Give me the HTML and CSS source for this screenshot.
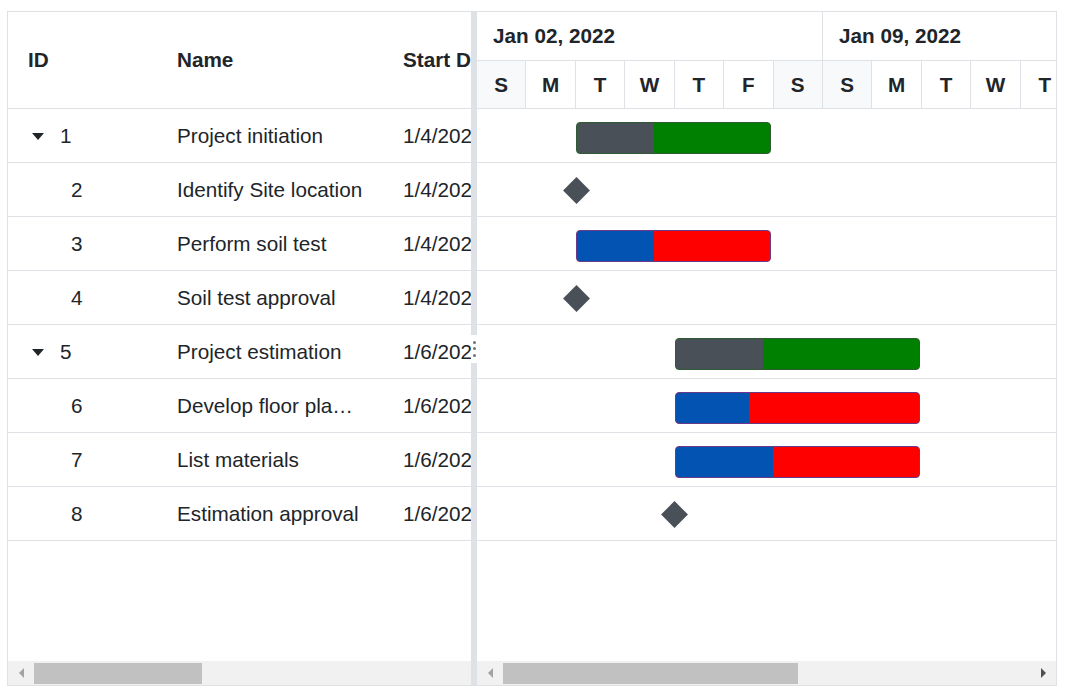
FILE: index.html
```html
<!DOCTYPE html>
<html lang="en">
<head>
    <meta charset="UTF-8">
    <meta name="viewport" content="width=device-width, initial-scale=1.0">
    <title>Gantt</title>
    <link rel="stylesheet" href="styles.css">
</head>
<body>
    <div class="gantt">
        <!-- grid pane -->
        <div class="grid-pane">
            <div class="grid-header">
                <div class="cell col-id">ID</div>
                <div class="cell col-name">Name</div>
                <div class="cell col-start">Start Date</div>
            </div>
            <div class="grid-body">
                <div class="row">
                    <div class="cell col-id parent"><span class="caret"></span>1</div>
                    <div class="cell col-name">Project initiation</div>
                    <div class="cell col-start">1/4/2022</div>
                </div>
                <div class="row">
                    <div class="cell col-id child">2</div>
                    <div class="cell col-name">Identify Site location</div>
                    <div class="cell col-start">1/4/2022</div>
                </div>
                <div class="row">
                    <div class="cell col-id child">3</div>
                    <div class="cell col-name">Perform soil test</div>
                    <div class="cell col-start">1/4/2022</div>
                </div>
                <div class="row">
                    <div class="cell col-id child">4</div>
                    <div class="cell col-name">Soil test approval</div>
                    <div class="cell col-start">1/4/2022</div>
                </div>
                <div class="row">
                    <div class="cell col-id parent"><span class="caret"></span>5</div>
                    <div class="cell col-name">Project estimation</div>
                    <div class="cell col-start">1/6/2022</div>
                </div>
                <div class="row">
                    <div class="cell col-id child">6</div>
                    <div class="cell col-name">Develop floor plan for estimation</div>
                    <div class="cell col-start">1/6/2022</div>
                </div>
                <div class="row">
                    <div class="cell col-id child">7</div>
                    <div class="cell col-name">List materials</div>
                    <div class="cell col-start">1/6/2022</div>
                </div>
                <div class="row">
                    <div class="cell col-id child">8</div>
                    <div class="cell col-name">Estimation approval</div>
                    <div class="cell col-start">1/6/2022</div>
                </div>
            </div>
            <div class="hscroll">
                <div class="sb-btn"><span class="arrow-left off"></span></div>
                <div class="sb-thumb" style="width:168px"></div>
            </div>
        </div>

        <div class="splitter">
            <div class="split-line"></div>
            <div class="split-handle"><span></span><span></span><span></span></div>
            <div class="split-line"></div>
        </div>

        <!-- chart pane -->
        <div class="chart-pane">
            <div class="timeline">
                <div class="tier top">
                    <div class="week">Jan 02, 2022</div>
                    <div class="week">Jan 09, 2022</div>
                </div>
                <div class="tier bottom">
                    <div class="day weekend">S</div>
                    <div class="day">M</div>
                    <div class="day">T</div>
                    <div class="day">W</div>
                    <div class="day">T</div>
                    <div class="day">F</div>
                    <div class="day weekend">S</div>
                    <div class="day weekend">S</div>
                    <div class="day">M</div>
                    <div class="day">T</div>
                    <div class="day">W</div>
                    <div class="day">T</div>
                    <div class="day">F</div>
                    <div class="day weekend">S</div>
                </div>
            </div>
            <div class="chart-body">
                <div class="chart-row">
                    <div class="bar parent-bar" style="left:99px;width:195px"><div class="progress" style="width:40%"></div></div>
                </div>
                <div class="chart-row">
                    <div class="milestone" style="left:99px"></div>
                </div>
                <div class="chart-row">
                    <div class="bar child-bar" style="left:99px;width:195px"><div class="progress" style="width:40%"></div></div>
                </div>
                <div class="chart-row">
                    <div class="milestone" style="left:99px"></div>
                </div>
                <div class="chart-row">
                    <div class="bar parent-bar" style="left:198px;width:245px"><div class="progress" style="width:36%"></div></div>
                </div>
                <div class="chart-row">
                    <div class="bar child-bar" style="left:198px;width:245px"><div class="progress" style="width:30%"></div></div>
                </div>
                <div class="chart-row">
                    <div class="bar child-bar" style="left:198px;width:245px"><div class="progress" style="width:40%"></div></div>
                </div>
                <div class="chart-row">
                    <div class="milestone" style="left:197px"></div>
                </div>
            </div>
            <div class="hscroll">
                <div class="sb-btn"><span class="arrow-left off"></span></div>
                <div class="sb-thumb" style="width:295px"></div>
                <div class="sb-space"></div>
                <div class="sb-btn"><span class="arrow-right"></span></div>
            </div>
        </div>
    </div>
</body>
</html>
```

FILE: styles.css
```css
body {
    margin: 0;
    padding: 11px 0 0 7px;
    font-family: "Liberation Sans", Arial, sans-serif;
    color: #212529;
    background: #fff;
}
.gantt {
    width: 1050px;
    height: 675px;
    box-sizing: border-box;
    border: 1px solid #dee2e6;
    display: flex;
    overflow: hidden;
}

/* grid */
.grid-pane {
    width: 463px;
    display: flex;
    flex-direction: column;
    overflow: hidden;
}
.grid-header {
    height: 97px;
    box-sizing: border-box;
    border-bottom: 1px solid #dee2e6;
    display: flex;
    align-items: center;
    font-weight: bold;
    font-size: 20.7px;
}
.grid-body {
    flex: 1;
}
.row {
    height: 54px;
    box-sizing: border-box;
    border-bottom: 1px solid #dee2e6;
    display: flex;
    align-items: center;
    padding-top: 1px;
    font-size: 20.7px;
}
.cell {
    flex: none;
    box-sizing: border-box;
    padding-left: 20px;
    white-space: nowrap;
    overflow: hidden;
    text-overflow: ellipsis;
}
.col-id { width: 150px; }
.col-name { width: 225px; padding-left: 19px; padding-right: 20px; }
.col-start { width: 200px; }
.col-id.parent {
    padding-left: 24px;
    display: flex;
    align-items: center;
}
.col-id.child { padding-left: 63px; }
.caret {
    width: 0;
    height: 0;
    border-left: 6.5px solid transparent;
    border-right: 6.5px solid transparent;
    border-top: 7px solid #212529;
    margin-right: 16px;
}

/* splitter */
.splitter {
    width: 6px;
    display: flex;
    flex-direction: column;
}
.split-line {
    flex: 1;
    background: #dee2e6;
}
.split-handle {
    height: 28px;
    background: #fff;
    display: flex;
    flex-direction: column;
    align-items: center;
    justify-content: center;
    gap: 3.5px;
}
.split-handle span {
    width: 3px;
    height: 3px;
    border-radius: 50%;
    background: #6c757d;
}

/* chart */
.chart-pane {
    flex: 1;
    display: flex;
    flex-direction: column;
    overflow: hidden;
}
.timeline {
    height: 97px;
    box-sizing: border-box;
    border-bottom: 1px solid #dee2e6;
    font-weight: bold;
    font-size: 20.7px;
}
.tier {
    display: flex;
    box-sizing: border-box;
}
.tier.top {
    height: 49px;
    border-bottom: 1px solid #dee2e6;
}
.tier.bottom {
    height: 47px;
}
.week {
    flex: none;
    width: 346px;
    box-sizing: border-box;
    border-right: 1px solid #dee2e6;
    padding-left: 16px;
    display: flex;
    align-items: center;
}
.day {
    flex: none;
    width: 49.43px;
    box-sizing: border-box;
    border-right: 1px solid #dee2e6;
    display: flex;
    align-items: center;
    justify-content: center;
}
.day.weekend {
    background: #f8f9fa;
}
.chart-body {
    flex: 1;
}
.chart-row {
    position: relative;
    height: 54px;
    box-sizing: border-box;
    border-bottom: 1px solid #dee2e6;
}
.bar {
    position: absolute;
    top: 13px;
    height: 32px;
    box-sizing: border-box;
    border-radius: 4px;
    overflow: hidden;
}
.bar .progress {
    height: 100%;
}
.parent-bar {
    background: #008000;
    border: 1px solid #2f5b33;
}
.parent-bar .progress {
    background: #495057;
}
.child-bar {
    background: #ff0000;
    border: 1px solid #6a3a8a;
}
.child-bar .progress {
    background: #0353b3;
}
.milestone {
    position: absolute;
    top: 18px;
    width: 19px;
    height: 19px;
    margin-left: -9.5px;
    background: #495057;
    transform: rotate(45deg);
}

/* scrollbars */
.hscroll {
    height: 24px;
    flex: none;
    background: #f1f1f1;
    display: flex;
    align-items: center;
}
.sb-btn {
    width: 26px;
    height: 100%;
    flex: none;
    display: flex;
    align-items: center;
    justify-content: center;
}
.sb-thumb {
    height: 21px;
    flex: none;
    background: #c1c1c1;
}
.sb-space { flex: 1; }
.arrow-left {
    width: 0;
    height: 0;
    border-top: 5px solid transparent;
    border-bottom: 5px solid transparent;
    border-right: 5px solid #505050;
}
.arrow-right {
    width: 0;
    height: 0;
    border-top: 5px solid transparent;
    border-bottom: 5px solid transparent;
    border-left: 5px solid #505050;
}
.arrow-left.off {
    border-right-color: #a3a3a3;
}
```
